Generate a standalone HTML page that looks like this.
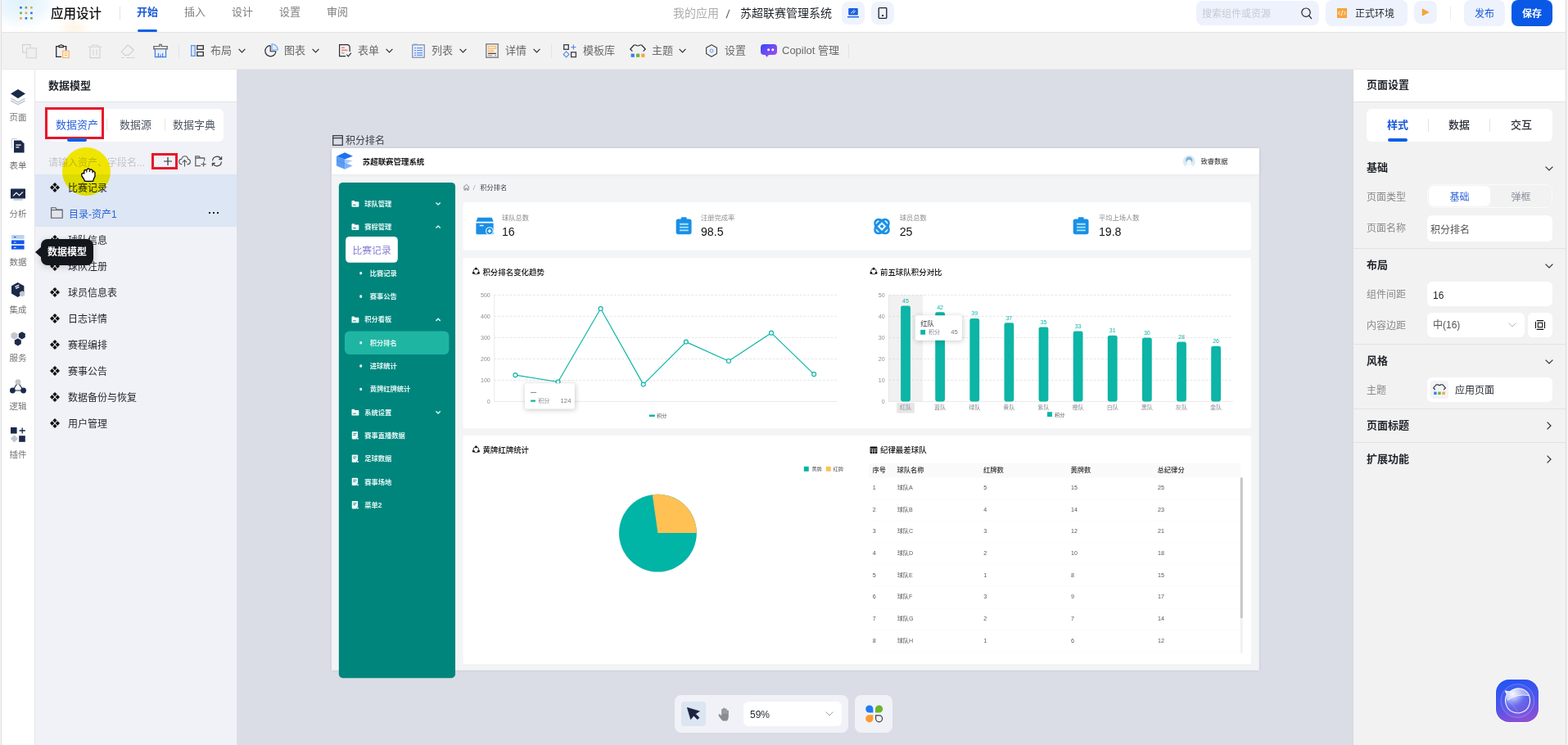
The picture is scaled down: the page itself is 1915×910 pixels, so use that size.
<!DOCTYPE html>
<html lang="zh-CN">
<head>
<meta charset="utf-8">
<title>应用设计 - 苏超联赛管理系统</title>
<style>
*{box-sizing:border-box;margin:0;padding:0}
html,body{width:1915px;height:910px;overflow:hidden;background:#fff}
body{font-family:"Liberation Sans","Noto Sans CJK SC",sans-serif;font-size:13px;color:#1f2329;position:relative;-webkit-font-smoothing:antialiased}
.a{position:absolute}
.t{position:absolute;white-space:nowrap;line-height:20px;height:20px}
.b{font-weight:bold}
.m{font-weight:500}
svg{position:absolute;overflow:visible}
#app{will-change:transform;position:absolute;left:0;top:0;width:1915px;height:910px;overflow:hidden;background:#fff}
/* header */
#hdr{left:0;top:0;width:1915px;height:40px;background:#fff;border-bottom:1px solid #e3e3e3}
#tb{left:0;top:40px;width:1915px;height:45px;background:#f2f2f2;box-shadow:inset 0 -1px 0 #e9e9e9}
.tab{font-size:13px;color:#808080}
.tbt{font-size:13px;color:#6a6a6a}
.vd{position:absolute;width:1px;background:#dcdcdc}
/* rail */
#rail{left:2px;top:85px;width:41px;height:825px;background:#fff;border-right:1px solid #e6e6e6}
.rl{position:absolute;left:0;width:40px;text-align:center;font-size:10.5px;color:#747474;line-height:16px;height:16px;white-space:nowrap}
/* left panel */
#lp{left:43px;top:85px;width:246px;height:825px;background:#f0f2f7}
.li{position:absolute;left:0;width:246px;height:32px}
.li .t{left:40px;top:7px;font-size:13px;color:#1f2329}

/* canvas */
#cv{left:289px;top:85px;width:1364px;height:825px;background:#dadde6}
/* right panel */
#rp{left:1653px;top:85px;width:262px;height:825px;background:#f2f2f2;box-shadow:-1px 0 0 #d6d8de}
.rh{font-size:13px;font-weight:bold;color:#1f2329}
.rlab{font-size:12px;color:#8a8a8a}
.inp{position:absolute;background:#fff;border-radius:6px}
.hl{position:absolute;left:0;width:262px;height:1px;background:#e2e2e2}
/* page */
#pg .t{margin-top:1.5px}
#pg .sm .t{margin-top:.4px}
.mi{position:absolute;left:0;width:141px;height:28px;color:#fff;font-size:8px;font-weight:bold}
.mi .t{line-height:12px;height:12px;top:8px}
.ax{font-family:"Liberation Sans","Noto Sans CJK SC",sans-serif}
.th,.td{position:absolute;white-space:nowrap;font-size:7.5px;line-height:12px;height:12px}
.th{color:#333;font-weight:bold}
.td{color:#444}
</style>
</head>
<body>
<div id="app">
<!-- ===== top header ===== -->
<div id="hdr" class="a">
  <div class="a" style="left:0;top:0;width:130px;height:39px;background:radial-gradient(ellipse 46px 34px at 26px 2px,rgba(214,236,250,.75) 0%,rgba(226,242,252,.6) 60%,rgba(255,255,255,0) 100%),radial-gradient(ellipse 26px 16px at 90px 34px,rgba(255,234,208,.6),rgba(255,255,255,0) 80%)"></div>
  <svg style="left:24px;top:8px" width="16" height="16" viewBox="0 0 16 16">
    <rect x="0.2" y="0" width="2.6" height="2.6" fill="#2f6fe4"/><rect x="6.6" y="0" width="2.6" height="2.6" fill="#6fae3c"/><rect x="13.1" y="0" width="2.6" height="2.6" fill="#f0a24a"/>
    <rect x="0.2" y="6.6" width="2.6" height="2.6" fill="#6fae3c"/><rect x="6.6" y="6.6" width="2.6" height="2.6" fill="#f0a24a"/><rect x="13.1" y="6.6" width="2.6" height="2.6" fill="#2f6fe4"/>
    <rect x="0.2" y="13" width="2.6" height="2.6" fill="#f0a24a"/><rect x="6.6" y="13" width="2.6" height="2.6" fill="#2f6fe4"/><rect x="13.1" y="13" width="2.6" height="2.6" fill="#6fae3c"/>
  </svg>
  <div class="t m" style="left:62px;top:5px;font-size:15.5px;line-height:24px;height:24px;color:#111">应用设计</div>
  <div class="vd" style="left:146px;top:8px;height:16px;background:#e4e4e4"></div>
  <div class="t tab b" style="left:167px;top:5px;color:#1a5ad7">开始</div>
  <div class="a" style="left:168px;top:36px;width:24px;height:3px;border-radius:1.5px;background:#0f5fe6"></div>
  <div class="t tab" style="left:225px;top:5px">插入</div>
  <div class="t tab" style="left:283px;top:5px">设计</div>
  <div class="t tab" style="left:341px;top:5px">设置</div>
  <div class="t tab" style="left:399px;top:5px">审阅</div>

  <div class="t" style="left:822px;top:6px;font-size:14px;color:#adadad">我的应用</div>
  <div class="t" style="left:887px;top:7px;font-size:14px;color:#555;transform:skewX(-6deg)">/</div>
  <div class="t" style="left:904px;top:6px;font-size:14px;color:#1f2329">苏超联赛管理系统</div>
  <div class="a" style="left:1028px;top:2px;width:28px;height:28px;border-radius:8px;background:#eef3fd"></div>
  <svg style="left:1035px;top:9px" width="14" height="14" viewBox="0 0 14 14"><rect x="1.2" y="1" width="11.6" height="8.6" rx="1" fill="#1a5fe0"/><path d="M4.2 7.2 L8.6 3.2 M6.6 7.4 L9.8 4.6" stroke="#fff" stroke-width="1" fill="none"/><rect x="0" y="11" width="14" height="1.4" fill="#1a5fe0"/></svg>
  <div class="a" style="left:1064px;top:2px;width:28px;height:28px;border-radius:8px;background:#eef3fd"></div>
  <svg style="left:1072px;top:9px" width="12" height="14" viewBox="0 0 12 14"><rect x="1.2" y="0.7" width="9.6" height="12.6" rx="0.8" fill="none" stroke="#1f2329" stroke-width="1.3"/><rect x="5" y="9" width="2" height="2" fill="#1f2329"/></svg>

  <div class="a" style="left:1461px;top:1px;width:150px;height:30px;border-radius:8px;background:#edf2fd"></div>
  <div class="t" style="left:1468px;top:7px;font-size:12px;color:#c6cad2">搜索组件或资源</div>
  <svg style="left:1588px;top:8px" width="16" height="16" viewBox="0 0 16 16"><circle cx="7" cy="7.2" r="5.2" fill="none" stroke="#222" stroke-width="1.2"/><path d="M10.8 11.2 L13.6 14.6" stroke="#222" stroke-width="1.3" stroke-linecap="round"/></svg>
  <div class="a" style="left:1619px;top:0;width:100px;height:32px;border-radius:8px;background:#edf2fd"></div>
  <div class="a" style="left:1633px;top:10px;width:12px;height:12px;background:#f6a43a"></div>
  <svg style="left:1633px;top:10px" width="12" height="12" viewBox="0 0 12 12"><path d="M3.6 3.6 L1.6 6 L3.6 8.4 M8.4 3.6 L10.4 6 L8.4 8.4 M6.9 2.6 L5.1 9.4" stroke="#fff" stroke-width="0.9" fill="none"/></svg>
  <div class="t" style="left:1655px;top:7px;font-size:12px;color:#1f2329">正式环境</div>
  <div class="a" style="left:1727px;top:1px;width:28px;height:28px;border-radius:8px;background:#edf2fd"></div>
  <svg style="left:1736px;top:10px" width="10" height="10" viewBox="0 0 10 10"><path d="M1.4 1.2 L8.6 5 L1.4 8.8 Z" fill="#f6a43a" stroke="#f6a43a" stroke-width="1.2" stroke-linejoin="round"/></svg>
  <div class="vd" style="left:1771px;top:8px;height:16px;background:#ebebeb"></div>
  <div class="a" style="left:1788px;top:0;width:50px;height:32px;border-radius:8px;background:#edf2fd"></div>
  <div class="t" style="left:1788px;top:7px;width:50px;text-align:center;font-size:12px;color:#1a5ad7">发布</div>
  <div class="a" style="left:1846px;top:0;width:50px;height:32px;border-radius:8px;background:#0a59e6"></div>
  <div class="t b" style="left:1846px;top:7px;width:50px;text-align:center;font-size:12px;color:#fff">保存</div>
</div>
<!-- ===== toolbar ===== -->
<div id="tb" class="a">
  <!-- copy -->
  <svg style="left:27px;top:14px" width="18" height="18" viewBox="0 0 18 18"><rect x="0.6" y="0.6" width="9.6" height="9.6" fill="none" stroke="#d2d2d2" stroke-width="1.2"/><rect x="5.4" y="4.8" width="12" height="12" fill="#efefef" stroke="#d6d6d6" stroke-width="1.2"/></svg>
  <!-- paste -->
  <svg style="left:68px;top:14px" width="17" height="18" viewBox="0 0 17 18"><path d="M7 15.4 H0.7 V2.6 H12.7 V7.4" fill="none" stroke="#2a2e36" stroke-width="1.3"/><path d="M4 3.6 V1.6 H5.6 Q6.7 -0.6 7.8 1.6 H9.4 V3.6 Z" fill="#f2f2f2" stroke="#2a2e36" stroke-width="1.1"/><rect x="8.6" y="8.2" width="7.6" height="8.4" fill="#fdf1df" stroke="#f4b262" stroke-width="1.1"/><path d="M10.6 11 H14.2 M10.6 13.6 H14.2" stroke="#f4b262" stroke-width="1"/></svg>
  <!-- delete -->
  <svg style="left:107px;top:14px" width="18" height="18" viewBox="0 0 18 18"><path d="M0.6 3.2 H17.4" stroke="#d6d6d6" stroke-width="1.1"/><path d="M5.6 3 V1 H12.4 V3" fill="none" stroke="#d6d6d6" stroke-width="1.1"/><path d="M3 3.4 V16.6 H15 V3.4" fill="none" stroke="#d2d2d2" stroke-width="1.2"/><path d="M7 6.4 V13.6 M11 6.4 V13.6" stroke="#d6d6d6" stroke-width="1.2"/></svg>
  <!-- eraser -->
  <svg style="left:147px;top:14px" width="18" height="18" viewBox="0 0 18 18"><path d="M9.2 1 L16.4 7 L10 13.4 H5.4 L1.2 9.4 Z" fill="none" stroke="#d2d2d2" stroke-width="1.2" stroke-linejoin="round"/><path d="M11.6 2.6 L15 6.2" stroke="#d2d2d2" stroke-width="1.2"/><path d="M1 16.5 H4.6 M7 16.5 H17.6" stroke="#d2d2d2" stroke-width="1.1"/></svg>
  <!-- brush -->
  <svg style="left:187px;top:14px" width="18" height="18" viewBox="0 0 18 18"><path d="M0.8 6.6 V2.6 H7.8 V0.4 H10.2 V2.6 H17.2 V6.6" fill="none" stroke="#6c6f76" stroke-width="1.4"/><path d="M1 5.8 H17" stroke="#6c6f76" stroke-width="1.6"/><path d="M2.4 6.6 V15.6 H15.6 V6.6" fill="#e4edfb" stroke="#3f7be0" stroke-width="1.2"/><path d="M6.4 15.4 V11 M9 15.4 V12.6 M11.6 15.4 V11" stroke="#3f7be0" stroke-width="1.1"/></svg>
  <div class="vd" style="left:218px;top:14px;height:17px;background:#e3e3e3"></div>
  <!-- layout -->
  <svg style="left:233px;top:15px" width="16" height="14" viewBox="0 0 16 14"><rect x="0.6" y="0.6" width="4.6" height="12.8" fill="#dfe9fc" stroke="#5b8fea" stroke-width="1.2"/><rect x="7.8" y="0.7" width="7.5" height="4.6" fill="none" stroke="#3a3e46" stroke-width="1.4"/><rect x="7.8" y="8.5" width="7.5" height="4.8" fill="none" stroke="#3a3e46" stroke-width="1.4"/></svg>
  <div class="t tbt" style="left:257px;top:12px">布局</div>
  <svg class="chev" style="left:291px;top:19px" width="9" height="6" viewBox="0 0 9 6"><path d="M0.6 0.8 L4.5 4.8 L8.4 0.8" fill="none" stroke="#2a2e36" stroke-width="1.2"/></svg>
  <!-- chart -->
  <svg style="left:323px;top:13px" width="18" height="18" viewBox="0 0 18 18"><path d="M7.2 2.6 A6.6 6.6 0 1 0 14 9.8" fill="none" stroke="#2a2e36" stroke-width="1.2"/><path d="M7.2 2.8 V9.8 H14" fill="none" stroke="#2a2e36" stroke-width="1.1"/><path d="M9 0.8 A7.4 7.4 0 0 1 16.4 8 H9 Z" fill="#e3ecfc" stroke="#6f9dec" stroke-width="1.1"/></svg>
  <div class="t tbt" style="left:347px;top:12px">图表</div>
  <svg class="chev" style="left:381px;top:19px" width="9" height="6" viewBox="0 0 9 6"><path d="M0.6 0.8 L4.5 4.8 L8.4 0.8" fill="none" stroke="#2a2e36" stroke-width="1.2"/></svg>
  <!-- form -->
  <svg style="left:414px;top:14px" width="16" height="17" viewBox="0 0 16 17"><path d="M8 14.6 H0.6 V0.6 H10.6 Q13 1 13.2 4 V9" fill="none" stroke="#2a2e36" stroke-width="1.2"/><path d="M3 4.2 H7 M3 7.4 H10.6" stroke="#f0887c" stroke-width="1.6"/><path d="M3 10.8 H6.6" stroke="#9aa0a8" stroke-width="1.2"/><path d="M9.4 12.6 L11.4 14.8 L14.8 10.6" fill="none" stroke="#2a2e36" stroke-width="1.2"/></svg>
  <div class="t tbt" style="left:437px;top:12px">表单</div>
  <svg class="chev" style="left:471px;top:19px" width="9" height="6" viewBox="0 0 9 6"><path d="M0.6 0.8 L4.5 4.8 L8.4 0.8" fill="none" stroke="#2a2e36" stroke-width="1.2"/></svg>
  <!-- list -->
  <svg style="left:503px;top:13px" width="16" height="18" viewBox="0 0 16 18"><rect x="0.7" y="1.8" width="14.6" height="15.4" fill="#e8effc" stroke="#8c93a8" stroke-width="1.3"/><path d="M2 1 H6.4" stroke="#7ea6ee" stroke-width="1.2"/><path d="M3 5.6 H13 M3 8.6 H13 M3 11.6 H13 M3 14.4 H13" stroke="#5f93ea" stroke-width="1.3"/><path d="M5.6 4.6 V15.4" stroke="#e8effc" stroke-width="1"/></svg>
  <div class="t tbt" style="left:527px;top:12px">列表</div>
  <svg class="chev" style="left:561px;top:19px" width="9" height="6" viewBox="0 0 9 6"><path d="M0.6 0.8 L4.5 4.8 L8.4 0.8" fill="none" stroke="#2a2e36" stroke-width="1.2"/></svg>
  <!-- detail -->
  <svg style="left:593px;top:13px" width="16" height="18" viewBox="0 0 16 18"><rect x="0.8" y="0.8" width="14.4" height="16.4" fill="#f5f0e8" stroke="#8a8c96" stroke-width="1.6"/><rect x="3.4" y="3.6" width="9.2" height="2.8" fill="#fde3b8" stroke="#f3b562" stroke-width="0.8"/><rect x="3.4" y="8.2" width="6" height="2" fill="#fde3b8" stroke="#f3b562" stroke-width="0.7"/><path d="M3 12.4 H13" stroke="#3a3e46" stroke-width="1.2"/><path d="M3 14.8 H8 M11 14.8 H13" stroke="#8a8c96" stroke-width="1"/></svg>
  <div class="t tbt" style="left:617px;top:12px">详情</div>
  <svg class="chev" style="left:651px;top:19px" width="9" height="6" viewBox="0 0 9 6"><path d="M0.6 0.8 L4.5 4.8 L8.4 0.8" fill="none" stroke="#2a2e36" stroke-width="1.2"/></svg>
  <div class="vd" style="left:673px;top:14px;height:17px;background:#e3e3e3"></div>
  <!-- template -->
  <svg style="left:688px;top:14px" width="17" height="17" viewBox="0 0 17 17"><rect x="0.7" y="0.7" width="5.6" height="5.6" fill="none" stroke="#3a3e46" stroke-width="1.3"/><path d="M12.4 0.6 V6.6 M9.4 3.6 H15.4" stroke="#5b8fea" stroke-width="1.2"/><path d="M3.6 8.8 L7 12.4 L3.6 16 L0.2 12.4 Z" fill="none" stroke="#5b8fea" stroke-width="1.2"/><rect x="9.6" y="9.8" width="5.8" height="5.8" fill="none" stroke="#3a3e46" stroke-width="1.3"/></svg>
  <div class="t tbt" style="left:712px;top:12px">模板库</div>
  <!-- theme -->
  <svg style="left:769px;top:14px" width="20" height="17" viewBox="0 0 20 17"><path d="M3.4 8.6 L0.8 6 L5.4 1 H7.4 Q10 3 12.6 1 H14.6 L19.2 6 L16.6 8.6" fill="none" stroke="#2a2e36" stroke-width="1.2" stroke-linejoin="round"/><rect x="1.6" y="11.6" width="4.2" height="4.2" fill="#3b7cf0"/><rect x="8" y="11.6" width="4.2" height="4.2" fill="#6fb43a"/><rect x="14.2" y="11.6" width="4.2" height="4.2" fill="#f6a43a"/></svg>
  <div class="t tbt" style="left:796px;top:12px">主题</div>
  <svg class="chev" style="left:829px;top:19px" width="9" height="6" viewBox="0 0 9 6"><path d="M0.6 0.8 L4.5 4.8 L8.4 0.8" fill="none" stroke="#2a2e36" stroke-width="1.2"/></svg>
  <!-- settings -->
  <svg style="left:861px;top:14px" width="16" height="16" viewBox="0 0 16 16"><path d="M8 0.7 L14.4 4.2 V11.6 L8 15.2 L1.6 11.6 V4.2 Z" fill="none" stroke="#3a3e46" stroke-width="1.1" stroke-linejoin="round"/><circle cx="8" cy="8" r="2" fill="#e3ecfc" stroke="#6f9dec" stroke-width="1"/></svg>
  <div class="t tbt" style="left:885px;top:12px">设置</div>
  <!-- copilot -->
  <svg style="left:929px;top:14px" width="20" height="17" viewBox="0 0 20 17"><defs><linearGradient id="cpg" x1="0" y1="0" x2="1" y2="1"><stop offset="0" stop-color="#2f4bf6"/><stop offset="1" stop-color="#b24cf0"/></linearGradient></defs><path d="M4 0 H16 Q20 0 20 4 V9 Q20 13 16 13 H10 L7.4 15.8 L5.6 13 H4 Q0 13 0 9 V4 Q0 0 4 0 Z" fill="url(#cpg)"/><circle cx="9.6" cy="6.8" r="1.5" fill="#fff"/><circle cx="14.8" cy="6.8" r="1.5" fill="#fff"/></svg>
  <div class="t tbt" style="left:955px;top:12px">Copilot 管理</div>
  <div class="vd" style="left:1036px;top:14px;height:17px;background:#e3e3e3"></div>
</div>
<!-- ===== left icon rail ===== -->
<div id="rail" class="a">
  <!-- coordinates inside rail: x-2, y-85 -->
  <svg style="left:11px;top:24px" width="18" height="19" viewBox="0 0 18 19"><path d="M0.4 11.2 L9 15.8 L17.6 11.2 M0.4 14 L9 18.6 L17.6 14" fill="none" stroke="#c3c7d0" stroke-width="1.5"/><path d="M9 0 L18 5.6 L9 11.2 L0 5.6 Z" fill="#1b2a4a"/></svg>
  <div class="rl" style="top:50px">页面</div>
  <svg style="left:12px;top:84px" width="16" height="18" viewBox="0 0 16 18"><path d="M0.5 12 V0.5 H7" fill="none" stroke="#c9ccd3" stroke-width="1"/><path d="M3 2.6 H11.6 L15.6 6.6 V17.6 H3 Z" fill="#1b2a4a"/><path d="M5.4 8.2 H11.6 M5.4 10.8 H9.4" stroke="#fff" stroke-width="1.2"/></svg>
  <div class="rl" style="top:109px">表单</div>
  <svg style="left:11px;top:145px" width="18" height="15" viewBox="0 0 18 15"><rect x="0" y="0.6" width="18" height="12" rx="0.6" fill="#1b2a4a"/><path d="M3 9.4 L7 5.4 L10.6 8.6 L15 4.4" fill="none" stroke="#fff" stroke-width="1.2"/><path d="M3.4 14 H14.6" stroke="#9aa0ad" stroke-width="1"/></svg>
  <div class="rl" style="top:168px">分析</div>
  <svg style="left:12px;top:202px" width="16" height="18" viewBox="0 0 16 18"><rect x="0" y="0" width="15.6" height="4.8" fill="#b9d0fb"/><rect x="0" y="6.4" width="15.6" height="4.8" fill="#1456e8"/><rect x="0" y="12.8" width="15.6" height="4.8" fill="#1456e8"/><path d="M3 2.6 H5.6" stroke="#1456e8" stroke-width="1.2"/><path d="M3 9 H5.6 M3 15.4 H5.6" stroke="#dfe8fc" stroke-width="1.2"/></svg>
  <div class="rl" style="top:227px">数据</div>
  <svg style="left:12px;top:260px" width="17" height="18" viewBox="0 0 17 18"><path d="M7.6 0 L15.4 4.2 V13.6 L7.6 18 L0 13.6 V4.2 Z" fill="#1b2a4a"/><path d="M4.4 5.4 L9.4 3 M5.2 7.4 L9.4 5.4" stroke="#fff" stroke-width="1.2"/><path d="M13.2 10.2 L16.2 12 V15.6 L13.2 17.4 L10 15.6 V12 Z" fill="#c3c6cd"/></svg>
  <div class="rl" style="top:285px">集成</div>
  <svg style="left:11px;top:320px" width="18" height="18" viewBox="0 0 18 18"><path d="M4.4 0.4 L8.4 2.7 V7.3 L4.4 9.6 L0.4 7.3 V2.7 Z" fill="#c3c6cd"/><path d="M13.8 0.2 L17.8 2.5 V7.1 L13.8 9.4 L9.8 7.1 V2.5 Z" fill="#1b2a4a"/><path d="M8.8 8.2 L12.8 10.5 V15.1 L8.8 17.4 L4.8 15.1 V10.5 Z" fill="#1b2a4a"/></svg>
  <div class="rl" style="top:344px">服务</div>
  <svg style="left:10px;top:378px" width="20" height="18" viewBox="0 0 20 18"><path d="M10 4 L3.4 14 H16.6 Z" fill="none" stroke="#1b2a4a" stroke-width="1.1"/><circle cx="10" cy="3.6" r="3.4" fill="#c3c6cd"/><circle cx="3.4" cy="14" r="3.4" fill="#1b2a4a"/><circle cx="16.6" cy="14" r="3.4" fill="#1b2a4a"/></svg>
  <div class="rl" style="top:403px">逻辑</div>
  <svg style="left:11px;top:437px" width="19" height="19" viewBox="0 0 19 19"><rect x="0" y="0" width="7.6" height="7.6" fill="#1b2a4a"/><path d="M14.2 0.4 V7.6 M10.6 4 H17.8" stroke="#1b2a4a" stroke-width="1.3"/><path d="M4.4 9.2 L9 13.8 L4.4 18.4 L-0.2 13.8 Z" fill="#c3c6cd"/><rect x="10.2" y="10.2" width="7.6" height="7.6" fill="#1b2a4a"/></svg>
  <div class="rl" style="top:462px">插件</div>
</div>
<!-- ===== left panel ===== -->
<div id="lp" class="a">
  <div class="a" style="left:0;top:0;width:246px;height:39px;background:#fff;border-bottom:1px solid #e1e3e8;height:40px"></div>
  <div class="t b" style="left:16px;top:10px;font-size:13px;color:#1f2329">数据模型</div>
  <div class="a" style="left:16px;top:48px;width:214px;height:40px;border-radius:6px;background:#fff"></div>
  <div class="a" style="left:12px;top:46px;width:72px;height:39px;border:3px solid #e8142a;background:#fff"></div>
  <div class="t" style="left:25px;top:58px;font-size:13px;color:#2b63d9">数据资产</div>
  <div class="a" style="left:39px;top:84px;width:24px;height:4px;border-radius:2px;background:#0f5fe6"></div>
  <div class="vd" style="left:87px;top:60px;height:15px;background:#e6e6e6"></div>
  <div class="t" style="left:103px;top:58px;font-size:13px;color:#4e5560">数据源</div>
  <div class="vd" style="left:158px;top:60px;height:15px;background:#e6e6e6"></div>
  <div class="t" style="left:168px;top:58px;font-size:13px;color:#4e5560">数据字典</div>

  <div class="t" style="left:16px;top:104px;font-size:12px;color:#c2c5cc">请输入资产、字段名...</div>
  <div class="a" style="left:142px;top:102px;width:32px;height:20px;border:3px solid #e8142a"></div>
  <svg style="left:157px;top:107px" width="10" height="10" viewBox="0 0 10 10"><path d="M5 0 V10 M0 5 H10" stroke="#333" stroke-width="1.2"/></svg>
  <svg style="left:175px;top:105px" width="15" height="14" viewBox="0 0 15 14"><path d="M4.4 10.6 H3.6 Q0.6 10.2 0.6 7.2 Q0.8 4.4 3.8 4.2 Q4.8 0.8 7.8 0.8 Q11 0.8 11.6 4.4 Q14.4 4.8 14.4 7.6 Q14.2 10.4 11.4 10.6 H10.4" fill="none" stroke="#555" stroke-width="1.1"/><path d="M7.5 13.6 V6 M4.8 8.4 L7.5 5.6 L10.2 8.4" fill="none" stroke="#555" stroke-width="1.1"/></svg>
  <svg style="left:195px;top:105px" width="14" height="14" viewBox="0 0 14 14"><path d="M7 12.6 H0.8 V0.8 H5.2 L6.6 3 H11.6 V6.4 M0.8 3 H6" fill="none" stroke="#666" stroke-width="1.3"/><path d="M10.6 7.6 V13.6 M7.6 10.6 H13.6" stroke="#666" stroke-width="1.3"/></svg>
  <svg style="left:215px;top:105px" width="14" height="14" viewBox="0 0 14 14"><path d="M1.6 6.4 A5.4 5.4 0 0 1 11.8 4.2 M12.4 7.6 A5.4 5.4 0 0 1 2.2 9.8" fill="none" stroke="#444" stroke-width="1.2"/><path d="M12.6 1.2 V4.6 H9.2 M1.4 12.8 V9.4 H4.8" fill="none" stroke="#444" stroke-width="1.2"/></svg>

  <div class="a" style="left:0;top:128px;width:246px;height:64px;background:#dde6f4"></div>
  <!-- list -->
  <div class="li" style="top:128px"><svg class="ic" style="left:18px;top:10px" width="12" height="12" viewBox="0 0 12 12"><path d="M6 0 L8.6 2.6 L6 5.2 L3.4 2.6 Z M2.7 3.3 L5.3 6 L2.7 8.7 L0 6 Z M9.3 3.3 L12 6 L9.3 8.7 L6.7 6 Z M6 6.8 L8.6 9.4 L6 12 L3.4 9.4 Z" fill="#111"/></svg><div class="t" style="font-size:12px">比赛记录</div></div>
  <div class="li" style="top:160px">
    <svg style="left:19px;top:8px" width="15" height="14" viewBox="0 0 15 14"><path d="M0.6 13.2 V0.8 H6 L7 3 H14.2 V13.2 Z" fill="#e2e4ea" stroke="#555a66" stroke-width="1.1"/><path d="M0.6 3.6 H14" stroke="#555a66" stroke-width="1"/></svg>
    <div class="t" style="font-size:12px;color:#2b63d9;left:41px">目录-资产1</div>
    <div class="a" style="left:212px;top:14px;width:2px;height:2px;background:#222;box-shadow:5px 0 0 #222,10px 0 0 #222"></div>
  </div>
  <div class="li" style="top:192px"><svg class="ic" style="left:18px;top:10px" width="12" height="12" viewBox="0 0 12 12"><path d="M6 0 L8.6 2.6 L6 5.2 L3.4 2.6 Z M2.7 3.3 L5.3 6 L2.7 8.7 L0 6 Z M9.3 3.3 L12 6 L9.3 8.7 L6.7 6 Z M6 6.8 L8.6 9.4 L6 12 L3.4 9.4 Z" fill="#111"/></svg><div class="t" style="font-size:12px">球队信息</div></div>
  <div class="li" style="top:224px"><svg class="ic" style="left:18px;top:10px" width="12" height="12" viewBox="0 0 12 12"><path d="M6 0 L8.6 2.6 L6 5.2 L3.4 2.6 Z M2.7 3.3 L5.3 6 L2.7 8.7 L0 6 Z M9.3 3.3 L12 6 L9.3 8.7 L6.7 6 Z M6 6.8 L8.6 9.4 L6 12 L3.4 9.4 Z" fill="#111"/></svg><div class="t" style="font-size:12px">球队注册</div></div>
  <div class="li" style="top:256px"><svg class="ic" style="left:18px;top:10px" width="12" height="12" viewBox="0 0 12 12"><path d="M6 0 L8.6 2.6 L6 5.2 L3.4 2.6 Z M2.7 3.3 L5.3 6 L2.7 8.7 L0 6 Z M9.3 3.3 L12 6 L9.3 8.7 L6.7 6 Z M6 6.8 L8.6 9.4 L6 12 L3.4 9.4 Z" fill="#111"/></svg><div class="t" style="font-size:12px">球员信息表</div></div>
  <div class="li" style="top:288px"><svg class="ic" style="left:18px;top:10px" width="12" height="12" viewBox="0 0 12 12"><path d="M6 0 L8.6 2.6 L6 5.2 L3.4 2.6 Z M2.7 3.3 L5.3 6 L2.7 8.7 L0 6 Z M9.3 3.3 L12 6 L9.3 8.7 L6.7 6 Z M6 6.8 L8.6 9.4 L6 12 L3.4 9.4 Z" fill="#111"/></svg><div class="t" style="font-size:12px">日志详情</div></div>
  <div class="li" style="top:320px"><svg class="ic" style="left:18px;top:10px" width="12" height="12" viewBox="0 0 12 12"><path d="M6 0 L8.6 2.6 L6 5.2 L3.4 2.6 Z M2.7 3.3 L5.3 6 L2.7 8.7 L0 6 Z M9.3 3.3 L12 6 L9.3 8.7 L6.7 6 Z M6 6.8 L8.6 9.4 L6 12 L3.4 9.4 Z" fill="#111"/></svg><div class="t" style="font-size:12px">赛程编排</div></div>
  <div class="li" style="top:352px"><svg class="ic" style="left:18px;top:10px" width="12" height="12" viewBox="0 0 12 12"><path d="M6 0 L8.6 2.6 L6 5.2 L3.4 2.6 Z M2.7 3.3 L5.3 6 L2.7 8.7 L0 6 Z M9.3 3.3 L12 6 L9.3 8.7 L6.7 6 Z M6 6.8 L8.6 9.4 L6 12 L3.4 9.4 Z" fill="#111"/></svg><div class="t" style="font-size:12px">赛事公告</div></div>
  <div class="li" style="top:384px"><svg class="ic" style="left:18px;top:10px" width="12" height="12" viewBox="0 0 12 12"><path d="M6 0 L8.6 2.6 L6 5.2 L3.4 2.6 Z M2.7 3.3 L5.3 6 L2.7 8.7 L0 6 Z M9.3 3.3 L12 6 L9.3 8.7 L6.7 6 Z M6 6.8 L8.6 9.4 L6 12 L3.4 9.4 Z" fill="#111"/></svg><div class="t" style="font-size:12px">数据备份与恢复</div></div>
  <div class="li" style="top:416px"><svg class="ic" style="left:18px;top:10px" width="12" height="12" viewBox="0 0 12 12"><path d="M6 0 L8.6 2.6 L6 5.2 L3.4 2.6 Z M2.7 3.3 L5.3 6 L2.7 8.7 L0 6 Z M9.3 3.3 L12 6 L9.3 8.7 L6.7 6 Z M6 6.8 L8.6 9.4 L6 12 L3.4 9.4 Z" fill="#111"/></svg><div class="t" style="font-size:12px">用户管理</div></div>

  <!-- cursor highlight -->
  <div class="a" style="left:33px;top:95px;width:59px;height:59px;border-radius:50%;background:#fff200;mix-blend-mode:multiply"></div>
  <svg style="left:56px;top:120px" width="18" height="17" viewBox="0 0 18 17"><path d="M4.6 16.4 L3 13 L0.8 10 V7.4 L2.6 6.4 L3.8 7 V3.4 L5.6 2.4 L6.8 3 L8 1 H9.6 L10.8 2.4 L12.4 1.8 L14 3 V4.4 L15.6 4.2 L17 5.6 V10.4 L15.4 13.6 L14.6 16.4 Z" fill="#fff" stroke="#000" stroke-width="1.3" stroke-linejoin="round"/><path d="M6.8 3.2 V5.6 M10.6 2.6 V5.2 M14 4.6 V6.4" stroke="#000" stroke-width="1"/></svg>
</div>
<!-- tooltip -->
<div class="a" style="left:50px;top:292px;width:64px;height:32px;border-radius:8px;background:#14161d;box-shadow:0 2px 8px rgba(0,0,0,.18)"></div>
<svg style="left:43px;top:301px" width="8" height="14" viewBox="0 0 8 14"><path d="M8 0 L0 7 L8 14 Z" fill="#14161d"/></svg>
<div class="t b" style="left:50px;top:298px;width:64px;text-align:center;font-size:12px;color:#fff">数据模型</div>
<!-- ===== canvas ===== -->
<div id="cv" class="a"></div>
<svg style="left:406px;top:165px" width="13" height="13" viewBox="0 0 13 13"><rect x="0.7" y="0.7" width="11.6" height="11.6" fill="none" stroke="#3c4048" stroke-width="1.3"/><path d="M0.7 3.6 H12.3" stroke="#3c4048" stroke-width="1.3"/></svg>
<div class="t" style="left:422px;top:162px;font-size:12px;color:#3c4048">积分排名</div>
<div id="pg" class="a" style="left:405px;top:181px;width:1920px;height:1081px;transform:scale(0.59);transform-origin:0 0;background:#f2f4f6;box-shadow:0 0 5px rgba(60,70,90,.12)">
<div class="a" style="left:0;top:0;width:1920px;height:54px;background:#fff;box-shadow:0 2px 8px rgba(0,0,0,.06)"></div>
<svg style="left:9.6px;top:9.2px" width="34" height="35" viewBox="0 0 34 35"><path d="M0 8.1 L17.3 13.8 V34.5 L0 27.6 Z" fill="#5b9ef4"/><path d="M17.3 13.8 L33.4 17 L17.3 24.4 Z" fill="#a9c9f9"/><path d="M17.3 21 L33.4 27.4 L17.3 34.5 Z" fill="#7fb2f7"/><path d="M0 18 L17.3 24.4 V21 L0 15 Z" fill="#4a90f0" opacity=".5"/><path d="M0 8.1 L17.3 0 L33.9 7.5 L17.3 13.8 Z" fill="#1a73f0"/></svg>
<div class="t b" style="left:64px;top:15px;font-size:16px;line-height:24px;height:24px;color:#111">苏超联赛管理系统</div>
<div class="a" style="left:1762.4px;top:15px;width:26px;height:26px;border-radius:50%;background:#dcecf8;overflow:hidden"><div class="a" style="left:6px;top:2.5px;width:14px;height:13px;border-radius:7px 7px 6px 6px;background:#82b4da"></div><div class="a" style="left:8px;top:9px;width:10px;height:10px;border-radius:50%;background:#f4f9fd"></div><div class="a" style="left:4px;top:17.5px;width:18px;height:12px;border-radius:9px 9px 0 0;background:#fbfdff"></div></div>
<div class="t" style="left:1799px;top:13px;font-size:14px;line-height:24px;height:24px;color:#222">致睿数据</div>
<div class="a" style="left:15.3px;top:70.8px;width:240.4px;height:1026px;border-radius:8px;background:#00857d">
<div class="a sm" style="left:0;top:20px;width:240px;height:48px">
<svg style="left:26px;top:16px" width="16" height="16" viewBox="0 0 16 16"><path d="M0.5 2.8 Q0.5 1.4 1.9 1.4 H5.6 L7.4 3.4 H14 Q15.5 3.4 15.5 4.9 V13 Q15.5 14.6 14 14.6 H2 Q0.5 14.6 0.5 13 Z" fill="#f2fbfa"/><rect x="3.4" y="9.6" width="6" height="1.6" fill="#00857d"/></svg>
<div class="t b" style="left:53px;top:14px;font-size:14px;color:#e0f6f3">球队管理</div>
<svg style="left:199.4px;top:20px" width="11" height="8" viewBox="0 0 11 8"><path d="M1 1.6 L5.5 6 L10 1.6" fill="none" stroke="#d8f3f0" stroke-width="2.5"/></svg>
</div>
<div class="a sm" style="left:0;top:68px;width:240px;height:48px">
<svg style="left:26px;top:16px" width="16" height="16" viewBox="0 0 16 16"><path d="M0.5 2.8 Q0.5 1.4 1.9 1.4 H5.6 L7.4 3.4 H14 Q15.5 3.4 15.5 4.9 V13 Q15.5 14.6 14 14.6 H2 Q0.5 14.6 0.5 13 Z" fill="#f2fbfa"/><rect x="3.4" y="9.6" width="6" height="1.6" fill="#00857d"/></svg>
<div class="t b" style="left:53px;top:14px;font-size:14px;color:#e0f6f3">赛程管理</div>
<svg style="left:199.4px;top:20px" width="11" height="8" viewBox="0 0 11 8"><path d="M1 6.4 L5.5 2 L10 6.4" fill="none" stroke="#d8f3f0" stroke-width="2.5"/></svg>
</div>
<div class="a sm" style="left:0;top:164px;width:240px;height:48px">
<div class="a" style="left:42.6px;top:21.4px;width:5.6px;height:5.6px;border-radius:50%;background:#e8faf8"></div>
<div class="t b" style="left:64px;top:14px;font-size:14px;color:#e0f6f3">比赛记录</div>
</div>
<div class="a sm" style="left:0;top:212px;width:240px;height:48px">
<div class="a" style="left:42.6px;top:21.4px;width:5.6px;height:5.6px;border-radius:50%;background:#e8faf8"></div>
<div class="t b" style="left:64px;top:14px;font-size:14px;color:#e0f6f3">赛事公告</div>
</div>
<div class="a sm" style="left:0;top:260px;width:240px;height:48px">
<svg style="left:26px;top:16px" width="16" height="16" viewBox="0 0 16 16"><path d="M0.5 2.8 Q0.5 1.4 1.9 1.4 H5.6 L7.4 3.4 H14 Q15.5 3.4 15.5 4.9 V13 Q15.5 14.6 14 14.6 H2 Q0.5 14.6 0.5 13 Z" fill="#f2fbfa"/><rect x="3.4" y="9.6" width="6" height="1.6" fill="#00857d"/></svg>
<div class="t b" style="left:53px;top:14px;font-size:14px;color:#e0f6f3">积分看板</div>
<svg style="left:199.4px;top:20px" width="11" height="8" viewBox="0 0 11 8"><path d="M1 6.4 L5.5 2 L10 6.4" fill="none" stroke="#d8f3f0" stroke-width="2.5"/></svg>
</div>
<div class="a" style="left:12px;top:308px;width:216px;height:48px;border-radius:10px;background:#1fb5a3"></div>
<div class="a sm" style="left:0;top:308px;width:240px;height:48px">
<div class="a" style="left:42.6px;top:21.4px;width:5.6px;height:5.6px;border-radius:50%;background:#e8faf8"></div>
<div class="t b" style="left:64px;top:14px;font-size:14px;color:#e0f6f3">积分排名</div>
</div>
<div class="a sm" style="left:0;top:356px;width:240px;height:48px">
<div class="a" style="left:42.6px;top:21.4px;width:5.6px;height:5.6px;border-radius:50%;background:#e8faf8"></div>
<div class="t b" style="left:64px;top:14px;font-size:14px;color:#e0f6f3">进球统计</div>
</div>
<div class="a sm" style="left:0;top:404px;width:240px;height:48px">
<div class="a" style="left:42.6px;top:21.4px;width:5.6px;height:5.6px;border-radius:50%;background:#e8faf8"></div>
<div class="t b" style="left:64px;top:14px;font-size:14px;color:#e0f6f3">黄牌红牌统计</div>
</div>
<div class="a sm" style="left:0;top:452px;width:240px;height:48px">
<svg style="left:26px;top:16px" width="16" height="16" viewBox="0 0 16 16"><path d="M0.5 2.8 Q0.5 1.4 1.9 1.4 H5.6 L7.4 3.4 H14 Q15.5 3.4 15.5 4.9 V13 Q15.5 14.6 14 14.6 H2 Q0.5 14.6 0.5 13 Z" fill="#f2fbfa"/><rect x="3.4" y="9.6" width="6" height="1.6" fill="#00857d"/></svg>
<div class="t b" style="left:53px;top:14px;font-size:14px;color:#e0f6f3">系统设置</div>
<svg style="left:199.4px;top:20px" width="11" height="8" viewBox="0 0 11 8"><path d="M1 1.6 L5.5 6 L10 1.6" fill="none" stroke="#d8f3f0" stroke-width="2.5"/></svg>
</div>
<div class="a sm" style="left:0;top:500px;width:240px;height:48px">
<svg style="left:26px;top:15px" width="16" height="18" viewBox="0 0 16 18"><path d="M1 2 Q1 0.6 2.4 0.6 H12 Q13.4 0.6 13.4 2 V11 L10 16.4 H2.4 Q1 16.4 1 15 Z" fill="#f2fbfa"/><path d="M3.6 5 H10.8 M3.6 8.4 H8.6" stroke="#00857d" stroke-width="1.5"/><rect x="11.6" y="13.6" width="3" height="3" fill="#f2fbfa"/></svg>
<div class="t b" style="left:53px;top:14px;font-size:14px;color:#e0f6f3">赛事直播数据</div>
</div>
<div class="a sm" style="left:0;top:548px;width:240px;height:48px">
<svg style="left:26px;top:15px" width="16" height="18" viewBox="0 0 16 18"><path d="M1 2 Q1 0.6 2.4 0.6 H12 Q13.4 0.6 13.4 2 V11 L10 16.4 H2.4 Q1 16.4 1 15 Z" fill="#f2fbfa"/><path d="M3.6 5 H10.8 M3.6 8.4 H8.6" stroke="#00857d" stroke-width="1.5"/><rect x="11.6" y="13.6" width="3" height="3" fill="#f2fbfa"/></svg>
<div class="t b" style="left:53px;top:14px;font-size:14px;color:#e0f6f3">足球数据</div>
</div>
<div class="a sm" style="left:0;top:596px;width:240px;height:48px">
<svg style="left:26px;top:15px" width="16" height="18" viewBox="0 0 16 18"><path d="M1 2 Q1 0.6 2.4 0.6 H12 Q13.4 0.6 13.4 2 V11 L10 16.4 H2.4 Q1 16.4 1 15 Z" fill="#f2fbfa"/><path d="M3.6 5 H10.8 M3.6 8.4 H8.6" stroke="#00857d" stroke-width="1.5"/><rect x="11.6" y="13.6" width="3" height="3" fill="#f2fbfa"/></svg>
<div class="t b" style="left:53px;top:14px;font-size:14px;color:#e0f6f3">赛事场地</div>
</div>
<div class="a sm" style="left:0;top:644px;width:240px;height:48px">
<svg style="left:26px;top:15px" width="16" height="18" viewBox="0 0 16 18"><path d="M1 2 Q1 0.6 2.4 0.6 H12 Q13.4 0.6 13.4 2 V11 L10 16.4 H2.4 Q1 16.4 1 15 Z" fill="#f2fbfa"/><path d="M3.6 5 H10.8 M3.6 8.4 H8.6" stroke="#00857d" stroke-width="1.5"/><rect x="11.6" y="13.6" width="3" height="3" fill="#f2fbfa"/></svg>
<div class="t b" style="left:53px;top:14px;font-size:14px;color:#e0f6f3">菜单2</div>
</div>
<div class="a" style="left:13.6px;top:112.3px;width:108.6px;height:54.2px;border-radius:8px;background:#fff"></div>
<div class="t" style="left:13.6px;top:127px;width:108.6px;text-align:center;font-size:20px;line-height:26px;height:26px;color:#8680d4">比赛记录</div>
</div>
<svg style="left:271.69px;top:73.9px" width="14" height="14" viewBox="0 0 14 14"><path d="M0.8 7 L7 1.2 L13.2 7 M2.6 6 V12.8 H5.4 V9 H8.6 V12.8 H11.4 V6" fill="none" stroke="#60656e" stroke-width="1.2"/></svg>
<div class="t" style="left:293.22px;top:69.61999999999999px;font-size:14px;color:#a0a4ab;transform:skewX(-8deg)">/</div>
<div class="t" style="left:307.12px;top:69.61999999999999px;font-size:14px;color:#3c4048">积分排名</div>
<div class="a" style="left:272px;top:112.4px;width:1631px;height:98.6px;border-radius:4px;background:#fff"></div>
<svg style="left:298.64px;top:143.22px" width="36" height="37" viewBox="0 0 36 37"><path d="M3.4 0.8 H32.6 L36 9.2 H0 Z" fill="#1a8fe6" /><path d="M0 12 H36 V33.4 Q36 35.6 33.8 35.6 H2.2 Q0 35.6 0 33.4 Z" fill="#1a8fe6"/><rect x="7" y="16" width="9" height="2.6" rx="1.3" fill="#e6f6ff"/><circle cx="28" cy="28.4" r="7.4" fill="#1a8fe6" stroke="#e6f6ff" stroke-width="2"/><path d="M28 24.4 L32 28.4 L28 32.4 L24 28.4 Z" fill="#e6f6ff"/></svg>
<div class="t" style="left:352.37px;top:132.64000000000001px;font-size:14px;color:#8c8c8c">球队总数</div>
<div class="t" style="left:352.37px;top:156.9px;font-size:24px;line-height:32px;height:32px;color:#111">16</div>
<svg style="left:710.51px;top:141.69px" width="36" height="37" viewBox="0 0 36 37"><rect x="2" y="4.4" width="32" height="32" rx="4.6" fill="#1a8fe6"/><rect x="12.4" y="0.6" width="11.6" height="7" rx="1.6" fill="#1a8fe6"/><path d="M9.4 15.2 H27.6 M9.4 21.6 H27.6 M9.4 28 H27.6" stroke="#a8e8ff" stroke-width="3"/></svg>
<div class="t" style="left:764.41px;top:132.64000000000001px;font-size:14px;color:#8c8c8c">注册完成率</div>
<div class="t" style="left:764.41px;top:156.9px;font-size:24px;line-height:32px;height:32px;color:#111">98.5</div>
<svg style="left:1120.68px;top:144.41px" width="36" height="37" viewBox="0 0 36 37"><ellipse cx="18" cy="18" rx="19.6" ry="12.6" transform="rotate(45 18 18)" fill="#1a8fe6"/><ellipse cx="18" cy="18" rx="19.6" ry="12.6" transform="rotate(-45 18 18)" fill="#1a8fe6"/><path d="M18 9 L27 18 L18 27 L9 18 Z" fill="#e6f6ff"/><circle cx="18" cy="18" r="3.4" fill="#1a8fe6"/><path d="M6.6 11.4 Q7.8 8.2 11 6.8 M25 6.8 Q28.2 8.2 29.4 11.4 M29.4 24.6 Q28.2 27.8 25 29.2 M11 29.2 Q7.8 27.8 6.6 24.6" stroke="#e6f6ff" stroke-width="2.6" fill="none" stroke-linecap="round"/></svg>
<div class="t" style="left:1175.76px;top:132.64000000000001px;font-size:14px;color:#8c8c8c">球员总数</div>
<div class="t" style="left:1175.76px;top:156.9px;font-size:24px;line-height:32px;height:32px;color:#111">25</div>
<svg style="left:1533.05px;top:141.69px" width="36" height="37" viewBox="0 0 36 37"><rect x="2" y="4.4" width="32" height="32" rx="4.6" fill="#1a8fe6"/><rect x="12.4" y="0.6" width="11.6" height="7" rx="1.6" fill="#1a8fe6"/><path d="M9.4 15.2 H27.6 M9.4 21.6 H27.6 M9.4 28 H27.6" stroke="#a8e8ff" stroke-width="3"/></svg>
<div class="t" style="left:1587.97px;top:132.64000000000001px;font-size:14px;color:#8c8c8c">平均上场人数</div>
<div class="t" style="left:1587.97px;top:156.9px;font-size:24px;line-height:32px;height:32px;color:#111">19.8</div>
<div class="a" style="left:272px;top:226.8px;width:1631px;height:352.8px;border-radius:4px;background:#fff"></div>
<div class="a" style="left:272px;top:595px;width:1631px;height:472.6px;border-radius:4px;background:#fff"></div>
<svg style="left:290.85px;top:246.86999999999998px" width="16" height="16" viewBox="0 0 16 16"><circle cx="8" cy="8.4" r="5.8" fill="none" stroke="#111" stroke-width="1.3"/><circle cx="8" cy="2.6" r="2.4" fill="#111"/><circle cx="2.8" cy="11.4" r="2.4" fill="#111"/><circle cx="13.2" cy="11.4" r="2.4" fill="#111"/></svg>
<div class="t m" style="left:312.54px;top:243.26999999999998px;font-size:16px;line-height:24px;height:24px;color:#111">积分排名变化趋势</div>
<svg style="left:1113.9px;top:246.86999999999998px" width="16" height="16" viewBox="0 0 16 16"><circle cx="8" cy="8.4" r="5.8" fill="none" stroke="#111" stroke-width="1.3"/><circle cx="8" cy="2.6" r="2.4" fill="#111"/><circle cx="2.8" cy="11.4" r="2.4" fill="#111"/><circle cx="13.2" cy="11.4" r="2.4" fill="#111"/></svg>
<div class="t m" style="left:1135.59px;top:243.26999999999998px;font-size:16px;line-height:24px;height:24px;color:#111">前五球队积分对比</div>
<svg style="left:290.85px;top:615.85px" width="16" height="16" viewBox="0 0 16 16"><circle cx="8" cy="8.4" r="5.8" fill="none" stroke="#111" stroke-width="1.3"/><circle cx="8" cy="2.6" r="2.4" fill="#111"/><circle cx="2.8" cy="11.4" r="2.4" fill="#111"/><circle cx="13.2" cy="11.4" r="2.4" fill="#111"/></svg>
<div class="t m" style="left:312.54px;top:612.25px;font-size:16px;line-height:24px;height:24px;color:#111">黄牌红牌统计</div>
<svg style="left:1113.9px;top:617.25px" width="16" height="16" viewBox="0 0 16 16"><rect x="0.5" y="1" width="15" height="14" rx="1.6" fill="#111"/><path d="M0.5 5.6 H15.5 M0.5 10 H15.5 M5.6 5.6 V15 M10.6 5.6 V15" stroke="#fff" stroke-width="1.1"/></svg>
<div class="t m" style="left:1135.59px;top:612.25px;font-size:16px;line-height:24px;height:24px;color:#111">纪律最差球队</div>
<svg style="left:0;top:0" width="1920" height="1080" viewBox="0 0 1920 1080">
<text class="ax" x="328.47" y="528.61" text-anchor="end" font-size="12" fill="#8a8f99">0</text>
<text class="ax" x="328.47" y="484.53999999999996" text-anchor="end" font-size="12" fill="#8a8f99">100</text>
<path d="M336.61 480.34 H1045.76" stroke="#d6d6d6" stroke-width="1" stroke-dasharray="5 3" fill="none"/>
<text class="ax" x="328.47" y="440.46999999999997" text-anchor="end" font-size="12" fill="#8a8f99">200</text>
<path d="M336.61 436.27 H1045.76" stroke="#d6d6d6" stroke-width="1" stroke-dasharray="5 3" fill="none"/>
<text class="ax" x="328.47" y="396.4" text-anchor="end" font-size="12" fill="#8a8f99">300</text>
<path d="M336.61 392.2 H1045.76" stroke="#d6d6d6" stroke-width="1" stroke-dasharray="5 3" fill="none"/>
<text class="ax" x="328.47" y="352.34" text-anchor="end" font-size="12" fill="#8a8f99">400</text>
<path d="M336.61 348.14 H1045.76" stroke="#d6d6d6" stroke-width="1" stroke-dasharray="5 3" fill="none"/>
<text class="ax" x="328.47" y="308.27" text-anchor="end" font-size="12" fill="#8a8f99">500</text>
<path d="M336.61 304.07 H1045.76" stroke="#d6d6d6" stroke-width="1" stroke-dasharray="5 3" fill="none"/>
<path d="M336.61 304.07 V524.41 H1045.76" stroke="#d9d9d9" stroke-width="1" fill="none"/>
<path d="M380.34 469.76 L468.64 483.86 L556.95 332.27 L645.25 489.15 L733.56 401.02 L821.86 440.68 L910.17 382.51 L998.47 468.0" fill="none" stroke="#0cb5a6" stroke-width="2" stroke-linejoin="round"/>
<circle cx="380.34" cy="469.76" r="4.2" fill="#fff" stroke="#0cb5a6" stroke-width="2"/>
<circle cx="468.64" cy="483.86" r="4.2" fill="#fff" stroke="#0cb5a6" stroke-width="2"/>
<circle cx="556.95" cy="332.27" r="4.2" fill="#fff" stroke="#0cb5a6" stroke-width="2"/>
<circle cx="645.25" cy="489.15" r="4.2" fill="#fff" stroke="#0cb5a6" stroke-width="2"/>
<circle cx="733.56" cy="401.02" r="4.2" fill="#fff" stroke="#0cb5a6" stroke-width="2"/>
<circle cx="821.86" cy="440.68" r="4.2" fill="#fff" stroke="#0cb5a6" stroke-width="2"/>
<circle cx="910.17" cy="382.51" r="4.2" fill="#fff" stroke="#0cb5a6" stroke-width="2"/>
<circle cx="998.47" cy="468.0" r="4.2" fill="#fff" stroke="#0cb5a6" stroke-width="2"/>
<rect x="657.29" y="551.73" width="12" height="4" rx="1" fill="#0cb5a6"/>
<text class="ax" x="672.88" y="558.07" font-size="10.5" fill="#555">积分</text>
<rect x="1153.22" y="304.07" width="70.51" height="220.34" fill="#f1f1f1"/>
<text class="ax" x="1145.08" y="528.61" text-anchor="end" font-size="12" fill="#8a8f99">0</text>
<text class="ax" x="1145.08" y="484.53999999999996" text-anchor="end" font-size="12" fill="#8a8f99">10</text>
<path d="M1153.22 480.34 H1866.1" stroke="#d6d6d6" stroke-width="1" stroke-dasharray="5 3" fill="none"/>
<text class="ax" x="1145.08" y="440.46999999999997" text-anchor="end" font-size="12" fill="#8a8f99">20</text>
<path d="M1153.22 436.27 H1866.1" stroke="#d6d6d6" stroke-width="1" stroke-dasharray="5 3" fill="none"/>
<text class="ax" x="1145.08" y="396.4" text-anchor="end" font-size="12" fill="#8a8f99">30</text>
<path d="M1153.22 392.2 H1866.1" stroke="#d6d6d6" stroke-width="1" stroke-dasharray="5 3" fill="none"/>
<text class="ax" x="1145.08" y="352.34" text-anchor="end" font-size="12" fill="#8a8f99">40</text>
<path d="M1153.22 348.14 H1866.1" stroke="#d6d6d6" stroke-width="1" stroke-dasharray="5 3" fill="none"/>
<text class="ax" x="1145.08" y="308.27" text-anchor="end" font-size="12" fill="#8a8f99">50</text>
<path d="M1153.22 304.07 H1866.1" stroke="#d6d6d6" stroke-width="1" stroke-dasharray="5 3" fill="none"/>
<path d="M1153.22 304.07 V524.41 H1866.1" stroke="#d9d9d9" stroke-width="1" fill="none"/>
<rect x="1169.83" y="527.12" width="36.61" height="21.36" fill="#e6e6e6"/>
<rect x="1178.14" y="326.1" width="20" height="198.31" rx="4" fill="#0cb5a6"/>
<text class="ax" x="1188.14" y="320.1" text-anchor="middle" font-size="12" fill="#0cb5a6">45</text>
<text class="ax" x="1188.14" y="541.52" text-anchor="middle" font-size="12" fill="#8a8f99">红队</text>
<rect x="1249.53" y="339.32" width="20" height="185.08" rx="4" fill="#0cb5a6"/>
<text class="ax" x="1259.53" y="333.32" text-anchor="middle" font-size="12" fill="#0cb5a6">42</text>
<text class="ax" x="1259.53" y="541.52" text-anchor="middle" font-size="12" fill="#8a8f99">蓝队</text>
<rect x="1320.92" y="352.54" width="20" height="171.86" rx="4" fill="#0cb5a6"/>
<text class="ax" x="1330.92" y="346.54" text-anchor="middle" font-size="12" fill="#0cb5a6">39</text>
<text class="ax" x="1330.92" y="541.52" text-anchor="middle" font-size="12" fill="#8a8f99">绿队</text>
<rect x="1392.31" y="361.36" width="20" height="163.05" rx="4" fill="#0cb5a6"/>
<text class="ax" x="1402.31" y="355.36" text-anchor="middle" font-size="12" fill="#0cb5a6">37</text>
<text class="ax" x="1402.31" y="541.52" text-anchor="middle" font-size="12" fill="#8a8f99">黄队</text>
<rect x="1463.69" y="370.17" width="20" height="154.24" rx="4" fill="#0cb5a6"/>
<text class="ax" x="1473.69" y="364.17" text-anchor="middle" font-size="12" fill="#0cb5a6">35</text>
<text class="ax" x="1473.69" y="541.52" text-anchor="middle" font-size="12" fill="#8a8f99">紫队</text>
<rect x="1535.08" y="378.98" width="20" height="145.42" rx="4" fill="#0cb5a6"/>
<text class="ax" x="1545.08" y="372.98" text-anchor="middle" font-size="12" fill="#0cb5a6">33</text>
<text class="ax" x="1545.08" y="541.52" text-anchor="middle" font-size="12" fill="#8a8f99">橙队</text>
<rect x="1606.47" y="387.8" width="20" height="136.61" rx="4" fill="#0cb5a6"/>
<text class="ax" x="1616.47" y="381.8" text-anchor="middle" font-size="12" fill="#0cb5a6">31</text>
<text class="ax" x="1616.47" y="541.52" text-anchor="middle" font-size="12" fill="#8a8f99">白队</text>
<rect x="1677.86" y="392.2" width="20" height="132.2" rx="4" fill="#0cb5a6"/>
<text class="ax" x="1687.86" y="386.2" text-anchor="middle" font-size="12" fill="#0cb5a6">30</text>
<text class="ax" x="1687.86" y="541.52" text-anchor="middle" font-size="12" fill="#8a8f99">黑队</text>
<rect x="1749.25" y="401.02" width="20" height="123.39" rx="4" fill="#0cb5a6"/>
<text class="ax" x="1759.25" y="395.02" text-anchor="middle" font-size="12" fill="#0cb5a6">28</text>
<text class="ax" x="1759.25" y="541.52" text-anchor="middle" font-size="12" fill="#8a8f99">灰队</text>
<rect x="1820.64" y="409.83" width="20" height="114.58" rx="4" fill="#0cb5a6"/>
<text class="ax" x="1830.64" y="403.83" text-anchor="middle" font-size="12" fill="#0cb5a6">26</text>
<text class="ax" x="1830.64" y="541.52" text-anchor="middle" font-size="12" fill="#8a8f99">金队</text>
<rect x="1481.36" y="546.02" width="10" height="10" fill="#0cb5a6"/>
<text class="ax" x="1496.61" y="555.36" font-size="10.5" fill="#555">积分</text>
<circle cx="675.25" cy="796.78" r="80.34" fill="#00b4a6"/>
<path d="M675.25 796.78 L755.59 796.78 A80.34 80.34 0 0 0 664.07 717.22 Z" fill="#ffc154"/>
<rect x="977.63" y="659.07" width="10" height="10" fill="#00b4a6"/>
<text class="ax" x="993.9" y="668.41" font-size="10.5" fill="#555">黄牌</text>
<rect x="1023.39" y="659.07" width="10" height="10" fill="#ffc154"/>
<text class="ax" x="1038.31" y="668.41" font-size="10.5" fill="#555">红牌</text>
</svg>
<div class="a" style="left:400.0px;top:487.12px;width:103.39px;height:53.22px;border-radius:4px;background:#fff;box-shadow:1px 2px 10px rgba(0,0,0,.2)"></div>
<div class="a" style="left:411.53px;top:504.62px;width:12px;height:1.6px;background:#333"></div>
<div class="a" style="left:411.53px;top:521.05px;width:10px;height:4px;border-radius:1px;background:#0cb5a6"></div>
<div class="t" style="left:427.46px;top:511.54999999999995px;font-size:12px;color:#8a8f99">积分</div>
<div class="t" style="left:473.9px;top:511.54999999999995px;font-size:13px;color:#777">124</div>
<div class="a" style="left:1208.14px;top:346.1px;width:96.95px;height:51.86px;border-radius:4px;background:#fff;box-shadow:1px 2px 10px rgba(0,0,0,.2)"></div>
<div class="t" style="left:1218.98px;top:351.89px;font-size:14px;color:#333">红队</div>
<div class="a" style="left:1218.98px;top:375.85px;width:10px;height:10px;background:#0cb5a6"></div>
<div class="t" style="left:1235.59px;top:369.35px;font-size:12px;color:#8a8f99">积分</div>
<div class="t" style="left:1281.69px;top:369.35px;font-size:13px;color:#777">45</div>
<div class="a" style="left:1111.69px;top:652.03px;width:768.98px;height:29.83px;background:#fafafa"></div>
<div class="t m" style="margin-top:0;left:1119.49px;top:657.43px;font-size:14px;color:#333">序号</div>
<div class="t m" style="margin-top:0;left:1170.17px;top:657.43px;font-size:14px;color:#333">球队名称</div>
<div class="t m" style="margin-top:0;left:1348.98px;top:657.43px;font-size:14px;color:#333">红牌数</div>
<div class="t m" style="margin-top:0;left:1529.83px;top:657.43px;font-size:14px;color:#333">黄牌数</div>
<div class="t m" style="margin-top:0;left:1709.49px;top:657.43px;font-size:14px;color:#333">总纪律分</div>
<div class="t" style="margin-top:0;left:1120.09px;top:693.3px;font-size:12px;color:#555">1</div>
<div class="t" style="margin-top:0;left:1170.77px;top:693.3px;font-size:12px;color:#555">球队A</div>
<div class="t" style="margin-top:0;left:1349.58px;top:693.3px;font-size:12px;color:#555">5</div>
<div class="t" style="margin-top:0;left:1530.4299999999998px;top:693.3px;font-size:12px;color:#555">15</div>
<div class="t" style="margin-top:0;left:1710.09px;top:693.3px;font-size:12px;color:#555">25</div>
<div class="a" style="left:1111.69px;top:726.27px;width:768.98px;height:1px;background:#f8f8f8"></div>
<div class="t" style="margin-top:0;left:1120.09px;top:738.35px;font-size:12px;color:#555">2</div>
<div class="t" style="margin-top:0;left:1170.77px;top:738.35px;font-size:12px;color:#555">球队B</div>
<div class="t" style="margin-top:0;left:1349.58px;top:738.35px;font-size:12px;color:#555">4</div>
<div class="t" style="margin-top:0;left:1530.4299999999998px;top:738.35px;font-size:12px;color:#555">14</div>
<div class="t" style="margin-top:0;left:1710.09px;top:738.35px;font-size:12px;color:#555">23</div>
<div class="a" style="left:1111.69px;top:771.32px;width:768.98px;height:1px;background:#f8f8f8"></div>
<div class="t" style="margin-top:0;left:1120.09px;top:783.4px;font-size:12px;color:#555">3</div>
<div class="t" style="margin-top:0;left:1170.77px;top:783.4px;font-size:12px;color:#555">球队C</div>
<div class="t" style="margin-top:0;left:1349.58px;top:783.4px;font-size:12px;color:#555">3</div>
<div class="t" style="margin-top:0;left:1530.4299999999998px;top:783.4px;font-size:12px;color:#555">12</div>
<div class="t" style="margin-top:0;left:1710.09px;top:783.4px;font-size:12px;color:#555">21</div>
<div class="a" style="left:1111.69px;top:816.37px;width:768.98px;height:1px;background:#f8f8f8"></div>
<div class="t" style="margin-top:0;left:1120.09px;top:828.4499999999999px;font-size:12px;color:#555">4</div>
<div class="t" style="margin-top:0;left:1170.77px;top:828.4499999999999px;font-size:12px;color:#555">球队D</div>
<div class="t" style="margin-top:0;left:1349.58px;top:828.4499999999999px;font-size:12px;color:#555">2</div>
<div class="t" style="margin-top:0;left:1530.4299999999998px;top:828.4499999999999px;font-size:12px;color:#555">10</div>
<div class="t" style="margin-top:0;left:1710.09px;top:828.4499999999999px;font-size:12px;color:#555">18</div>
<div class="a" style="left:1111.69px;top:861.42px;width:768.98px;height:1px;background:#f8f8f8"></div>
<div class="t" style="margin-top:0;left:1120.09px;top:873.5px;font-size:12px;color:#555">5</div>
<div class="t" style="margin-top:0;left:1170.77px;top:873.5px;font-size:12px;color:#555">球队E</div>
<div class="t" style="margin-top:0;left:1349.58px;top:873.5px;font-size:12px;color:#555">1</div>
<div class="t" style="margin-top:0;left:1530.4299999999998px;top:873.5px;font-size:12px;color:#555">8</div>
<div class="t" style="margin-top:0;left:1710.09px;top:873.5px;font-size:12px;color:#555">15</div>
<div class="a" style="left:1111.69px;top:906.47px;width:768.98px;height:1px;background:#f8f8f8"></div>
<div class="t" style="margin-top:0;left:1120.09px;top:918.55px;font-size:12px;color:#555">6</div>
<div class="t" style="margin-top:0;left:1170.77px;top:918.55px;font-size:12px;color:#555">球队F</div>
<div class="t" style="margin-top:0;left:1349.58px;top:918.55px;font-size:12px;color:#555">3</div>
<div class="t" style="margin-top:0;left:1530.4299999999998px;top:918.55px;font-size:12px;color:#555">9</div>
<div class="t" style="margin-top:0;left:1710.09px;top:918.55px;font-size:12px;color:#555">17</div>
<div class="a" style="left:1111.69px;top:951.53px;width:768.98px;height:1px;background:#f8f8f8"></div>
<div class="t" style="margin-top:0;left:1120.09px;top:963.6px;font-size:12px;color:#555">7</div>
<div class="t" style="margin-top:0;left:1170.77px;top:963.6px;font-size:12px;color:#555">球队G</div>
<div class="t" style="margin-top:0;left:1349.58px;top:963.6px;font-size:12px;color:#555">2</div>
<div class="t" style="margin-top:0;left:1530.4299999999998px;top:963.6px;font-size:12px;color:#555">7</div>
<div class="t" style="margin-top:0;left:1710.09px;top:963.6px;font-size:12px;color:#555">14</div>
<div class="a" style="left:1111.69px;top:996.58px;width:768.98px;height:1px;background:#f8f8f8"></div>
<div class="t" style="margin-top:0;left:1120.09px;top:1008.65px;font-size:12px;color:#555">8</div>
<div class="t" style="margin-top:0;left:1170.77px;top:1008.65px;font-size:12px;color:#555">球队H</div>
<div class="t" style="margin-top:0;left:1349.58px;top:1008.65px;font-size:12px;color:#555">1</div>
<div class="t" style="margin-top:0;left:1530.4299999999998px;top:1008.65px;font-size:12px;color:#555">6</div>
<div class="t" style="margin-top:0;left:1710.09px;top:1008.65px;font-size:12px;color:#555">12</div>
<div class="a" style="left:1111.69px;top:1041.63px;width:768.98px;height:1px;background:#f8f8f8"></div>
<div class="a" style="left:1880.68px;top:681.86px;width:5.4px;height:363.73px;background:#f1f1f1"></div>
<div class="a" style="left:1880.68px;top:681.86px;width:5.4px;height:291.19px;background:#c6c6c6"></div>
</div>
<div class="a" style="left:824px;top:849px;width:212px;height:46px;border-radius:8px;background:#f0f2f8"></div>
<div class="a" style="left:832px;top:857px;width:30px;height:30px;border-radius:4px;background:#dde5f2"></div>
<svg style="left:839px;top:864px" width="16" height="16" viewBox="0 0 16 16"><path d="M0.3 0.3 L15.4 4.8 L10.4 8 L15 12.6 L12.8 14.8 L8.2 10.2 L4.6 14.8 Z" fill="#1a2340" stroke="#1a2340" stroke-width="0.6" stroke-linejoin="round"/></svg>
<svg style="left:877px;top:864px" width="15" height="17" viewBox="0 0 15 17"><path d="M5.6 16.4 Q3.4 14.6 0.8 10.4 Q0 8.6 1.4 8.2 Q2.6 8.2 4.2 10.4 V3 Q4.2 1.8 5.2 1.8 Q6.2 1.8 6.2 3 V2 Q6.2 0.6 7.3 0.6 Q8.4 0.6 8.4 2 V2.6 Q8.4 1.4 9.5 1.4 Q10.6 1.4 10.6 2.6 V4.4 Q10.6 3.4 11.6 3.4 Q12.8 3.4 12.8 4.6 V11.4 Q12.8 14.6 11 16.4 Z" fill="#8a8c90"/><path d="M6.25 3 V8 M8.45 2.4 V8 M10.65 4 V8" stroke="#c4c6ca" stroke-width="0.6"/></svg>
<div class="a" style="left:908px;top:857px;width:120px;height:30px;border-radius:6px;background:#fff"></div>
<div class="t" style="left:916px;top:863px;font-size:12px;color:#1f2329">59%</div>
<svg style="left:1008px;top:869px" width="10" height="6" viewBox="0 0 10 6"><path d="M0.6 0.6 L5 5 L9.4 0.6" fill="none" stroke="#9a9ea6" stroke-width="1"/></svg>
<div class="a" style="left:1044px;top:849px;width:46px;height:46px;border-radius:8px;background:#f0f2f8"></div>
<svg style="left:1057px;top:861px" width="22" height="22" viewBox="0 0 22 22"><path d="M4.8 0.4 A4.6 4.6 0 0 1 9.4 5 V9.6 H4.8 A4.6 4.6 0 0 1 4.8 0.4 Z" fill="#1f7cf4"/><path d="M16.6 0.4 A4.6 4.6 0 0 1 16.6 9.6 H12 V5 A4.6 4.6 0 0 1 16.6 0.4 Z" fill="#6cb52d"/><path d="M4.8 21.4 A4.6 4.6 0 0 1 4.8 12.2 H9.4 V16.8 A4.6 4.6 0 0 1 4.8 21.4 Z" fill="#ff9a2e"/><path d="M16.6 20.8 A4 4 0 0 0 16.6 12.8 H12.6 V16.8 A4 4 0 0 0 16.6 20.8 Z" fill="none" stroke="#3c4048" stroke-width="1.2"/></svg>
<!-- ===== right panel ===== -->
<div id="rp" class="a">
  <!-- coordinates inside: x-1653, y-85 -->
  <div class="a" style="left:0;top:0;width:262px;height:40px;background:#fff;border-bottom:1px solid #e2e2e2"></div>
  <div class="t b" style="left:16px;top:9px;font-size:13px">页面设置</div>
  <div class="a" style="left:16px;top:48px;width:227px;height:40px;border-radius:6px;background:#fff"></div>
  <div class="t b" style="left:41px;top:58px;font-size:13px;color:#1a5ad7">样式</div>
  <div class="a" style="left:42px;top:84px;width:24px;height:4px;border-radius:2px;background:#0f5fe6"></div>
  <div class="vd" style="left:91px;top:60px;height:16px;background:#e4e4e4"></div>
  <div class="t m" style="left:116px;top:58px;font-size:13px;color:#2a2e36">数据</div>
  <div class="vd" style="left:166px;top:60px;height:16px;background:#e4e4e4"></div>
  <div class="t m" style="left:192px;top:58px;font-size:13px;color:#2a2e36">交互</div>

  <div class="t b rh" style="left:16px;top:110px">基础</div>
  <svg style="left:234px;top:118px" width="10" height="6" viewBox="0 0 10 6"><path d="M0.6 0.6 L5 5 L9.4 0.6" fill="none" stroke="#2a2e36" stroke-width="1.2"/></svg>
  <div class="t rlab" style="left:16px;top:146px">页面类型</div>
  <div class="a" style="left:90px;top:140px;width:153px;height:29px;border-radius:7px;background:#f2f2f2;border:1px solid #fafafa"></div>
  <div class="a" style="left:92px;top:142px;width:75px;height:25px;border-radius:6px;background:#fff"></div>
  <div class="t" style="left:92px;top:146px;width:75px;text-align:center;font-size:12px;color:#2b63d9">基础</div>
  <div class="t" style="left:167px;top:146px;width:75px;text-align:center;font-size:12px;color:#8a8f99">弹框</div>
  <div class="t rlab" style="left:16px;top:184px">页面名称</div>
  <div class="inp" style="left:90px;top:178px;width:153px;height:32px"></div>
  <div class="t" style="left:94px;top:186px;font-size:12px;color:#555">积分排名</div>
  <div class="hl" style="top:218px"></div>

  <div class="t b rh" style="left:16px;top:229px">布局</div>
  <svg style="left:234px;top:237px" width="10" height="6" viewBox="0 0 10 6"><path d="M0.6 0.6 L5 5 L9.4 0.6" fill="none" stroke="#2a2e36" stroke-width="1.2"/></svg>
  <div class="t rlab" style="left:16px;top:265px">组件间距</div>
  <div class="inp" style="left:90px;top:259px;width:153px;height:30px"></div>
  <div class="t" style="left:97px;top:266px;font-size:12px;color:#1f2329">16</div>
  <div class="t rlab" style="left:16px;top:303px">内容边距</div>
  <div class="inp" style="left:90px;top:297px;width:119px;height:30px"></div>
  <div class="t" style="left:97px;top:302px;font-size:12px;color:#555">中(16)</div>
  <svg style="left:189px;top:309px" width="10" height="6" viewBox="0 0 10 6"><path d="M0.6 0.6 L5 5 L9.4 0.6" fill="none" stroke="#b4b8c0" stroke-width="1"/></svg>
  <div class="inp" style="left:213px;top:297px;width:30px;height:30px"></div>
  <svg style="left:222px;top:306px" width="12" height="12" viewBox="0 0 12 12"><rect x="3.3" y="3.3" width="5.4" height="5.4" fill="none" stroke="#111" stroke-width="1.1"/><path d="M2.2 0.6 H9.8 M2.2 11.4 H9.8 M0.5 2.4 V9.6 M11.5 2.4 V9.6" stroke="#111" stroke-width="1.1" stroke-linecap="round"/></svg>
  <div class="hl" style="top:335px"></div>

  <div class="t b rh" style="left:16px;top:346px">风格</div>
  <svg style="left:234px;top:354px" width="10" height="6" viewBox="0 0 10 6"><path d="M0.6 0.6 L5 5 L9.4 0.6" fill="none" stroke="#2a2e36" stroke-width="1.2"/></svg>
  <div class="t rlab" style="left:16px;top:382px">主题</div>
  <div class="inp" style="left:90px;top:376px;width:153px;height:30px"></div>
  <div class="a" style="left:94px;top:380px;width:22px;height:22px;border-radius:4px;background:#f1f3f8"></div>
  <svg style="left:97px;top:384px" width="16" height="14" viewBox="0 0 16 14"><path d="M2.8 7 L0.6 4.8 L4.2 0.8 H6 Q8 2.4 10 0.8 H11.8 L15.4 4.8 L13.2 7" fill="none" stroke="#2a2e36" stroke-width="1.1" stroke-linejoin="round"/><rect x="1.2" y="9.6" width="3.4" height="3.4" fill="#3b7cf0"/><rect x="6.3" y="9.6" width="3.4" height="3.4" fill="#6fb43a"/><rect x="11.4" y="9.6" width="3.4" height="3.4" fill="#f6a43a"/></svg>
  <div class="t" style="left:124px;top:382px;font-size:12px;color:#1f2329">应用页面</div>
  <div class="hl" style="top:414px"></div>

  <div class="t b rh" style="left:16px;top:425px">页面标题</div>
  <svg style="left:236px;top:430px" width="6" height="10" viewBox="0 0 6 10"><path d="M0.6 0.6 L5 5 L0.6 9.4" fill="none" stroke="#2a2e36" stroke-width="1.2"/></svg>
  <div class="hl" style="top:455px"></div>
  <div class="t b rh" style="left:16px;top:466px">扩展功能</div>
  <svg style="left:236px;top:471px" width="6" height="10" viewBox="0 0 6 10"><path d="M0.6 0.6 L5 5 L0.6 9.4" fill="none" stroke="#2a2e36" stroke-width="1.2"/></svg>

  <!-- AI button -->
  <div class="a" style="left:174px;top:745px;width:52px;height:52px;border-radius:16px;background:linear-gradient(165deg,#1f54f4 0%,#4a55ea 50%,#9a4fd2 100%);box-shadow:0 0 0 1px rgba(255,255,255,.85)"></div>
  <svg style="left:174px;top:745px" width="52" height="52" viewBox="0 0 52 52">
    <defs><radialGradient id="aig" cx="0.3" cy="0.22" r="0.75"><stop offset="0" stop-color="#fff" stop-opacity=".95"/><stop offset="0.35" stop-color="#dfe2ff" stop-opacity=".6"/><stop offset="0.7" stop-color="#8f8ef0" stop-opacity=".25"/><stop offset="1" stop-color="#6a66e6" stop-opacity=".15"/></radialGradient></defs>
    <circle cx="26.4" cy="26" r="20.4" fill="rgba(150,150,255,.12)" stroke="rgba(255,255,255,.28)" stroke-width="0.9"/>
    <path d="M11.4 14 L17 15 Q23 10.4 29.6 11 Q41.4 13.6 41.6 26 Q40.6 39 28 41 Q13.6 40.6 11.6 27 Q11.2 20.6 13.6 18.4 Z" fill="url(#aig)" stroke="rgba(255,255,255,.92)" stroke-width="1.2" stroke-linejoin="round"/>
    <path d="M11.4 14 L17 15 Q23 10.4 29.6 11 Q37.6 12.4 40.4 19.6 Q25 17 14 25.4 Q12 21.6 13.6 18.4 Z" fill="rgba(255,255,255,.42)"/><path d="M14 25.4 Q25 17 40.4 19.6" fill="none" stroke="rgba(255,255,255,.8)" stroke-width="1"/>
    <path d="M14 26 Q22 30 27 41" fill="none" stroke="rgba(255,255,255,.25)" stroke-width="0.8"/>
  </svg>
  <div class="a" style="left:2px;top:0;width:0;height:0"></div>
</div>
<!-- window edges -->
<div class="a" style="left:0;top:0;width:2px;height:910px;background:#f6f6f6;border-right:1px solid #dcdcdc"></div>
<div class="a" style="left:1912px;top:0;width:3px;height:910px;background:#f4f4f4;border-left:1px solid #dcdcdc"></div>
</div>
</body>
</html>
